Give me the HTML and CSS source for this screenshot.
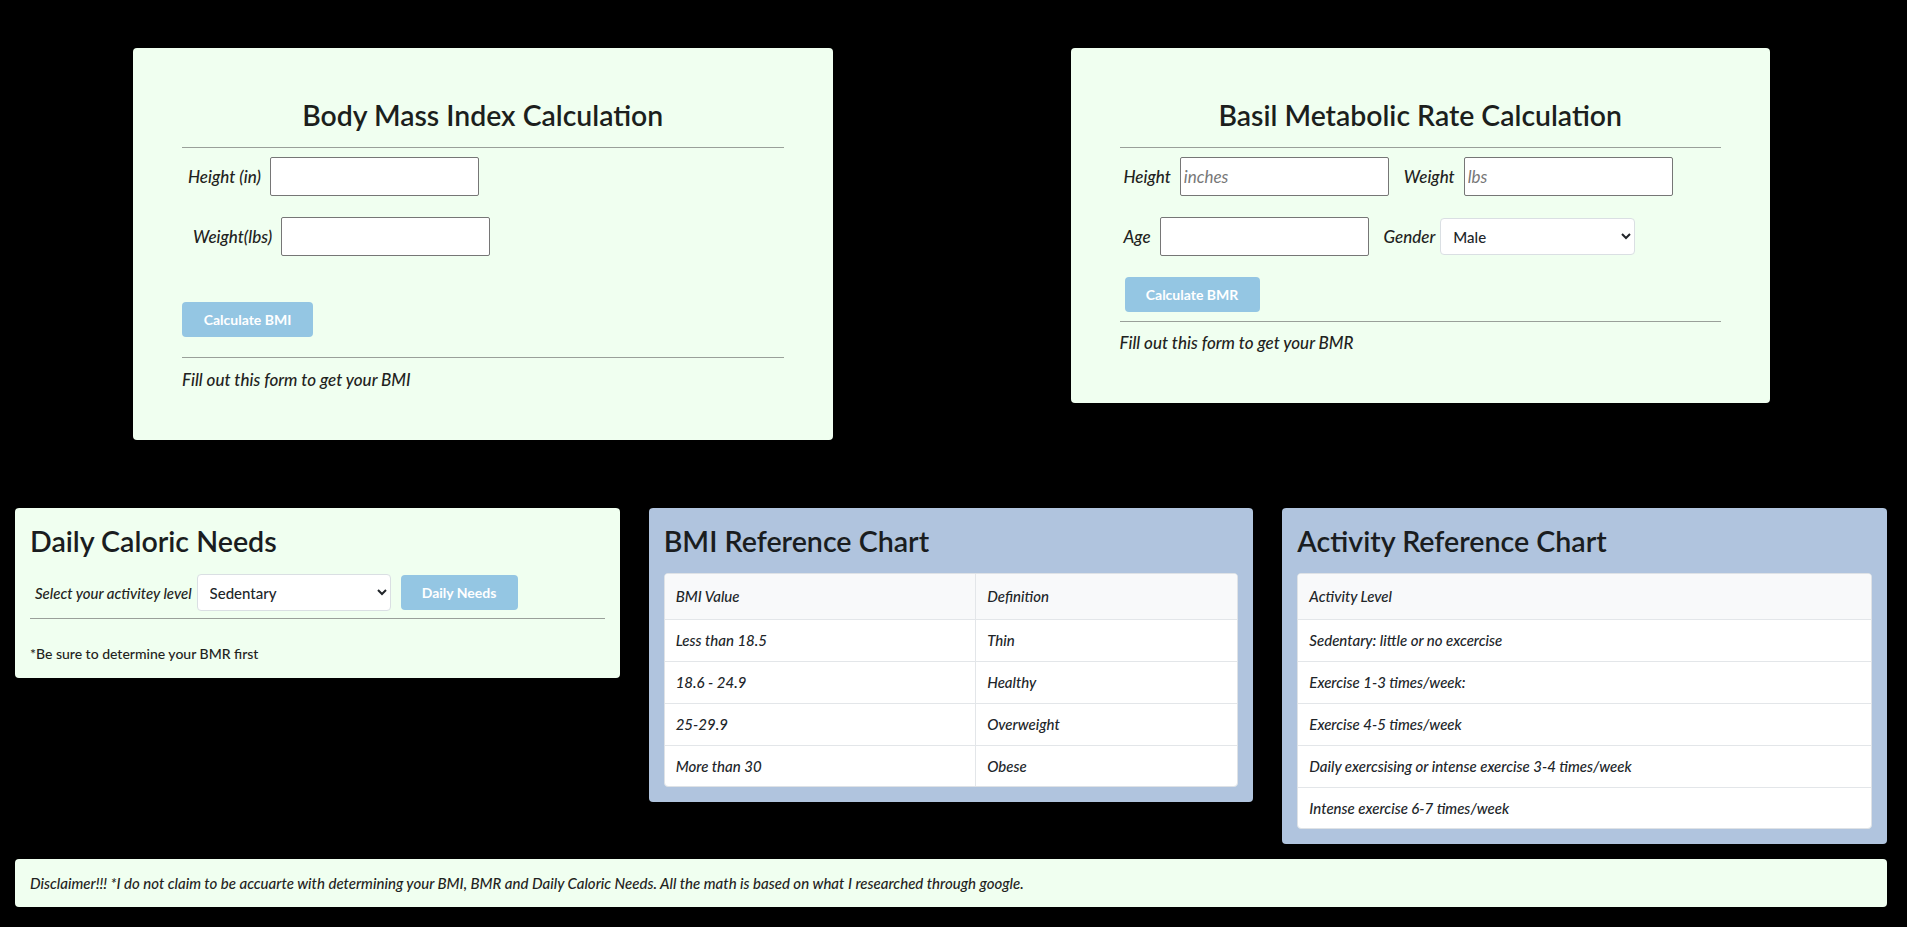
FILE: index.html
```html
<!DOCTYPE html>
<html lang="en">
<head>
<meta charset="utf-8">
<title>Health Calculators</title>
<link rel="stylesheet" href="styles.css">
</head>
<body>
<div class="page">
  <div class="top-row">
    <section class="card calc">
      <h2 class="calc-title">Body Mass Index Calculation</h2>
      <hr class="rule rule-top">
      <div class="form-row">
        <label class="lbl lbl-first">Height (in)</label>
        <input class="field" type="text">
      </div>
      <div class="form-row form-row-gap">
        <label class="lbl lbl-first lbl-weight">Weight(lbs)</label>
        <input class="field" type="text">
      </div>
      <button class="btn btn-bmi" type="button">Calculate BMI</button>
      <hr class="rule rule-bmi">
      <p class="result">Fill out this form to get your BMI</p>
    </section>

    <section class="card calc">
      <h2 class="calc-title">Basil Metabolic Rate Calculation</h2>
      <hr class="rule rule-top">
      <div class="form-row">
        <label class="lbl lbl-first lbl-bmr">Height</label>
        <input class="field" type="text" placeholder="inches">
        <label class="lbl lbl-next">Weight</label>
        <input class="field" type="text" placeholder="lbs">
      </div>
      <div class="form-row form-row-gap">
        <label class="lbl lbl-first lbl-bmr">Age</label>
        <input class="field" type="text">
        <label class="lbl lbl-next lbl-gender">Gender</label>
        <select class="choice choice-gender">
          <option>Male</option>
          <option>Female</option>
        </select>
      </div>
      <button class="btn btn-bmr" type="button">Calculate BMR</button>
      <hr class="rule rule-bmr">
      <p class="result">Fill out this form to get your BMR</p>
    </section>
  </div>

  <div class="mid-row">
    <section class="card panel daily">
      <h3 class="panel-title">Daily Caloric Needs</h3>
      <div class="daily-row">
        <label class="lbl lbl-daily">Select your activitey level</label>
        <select class="choice choice-activity">
          <option>Sedentary</option>
          <option>Exercise 1-3 times/week</option>
          <option>Exercise 4-5 times/week</option>
          <option>Daily exercise</option>
          <option>Intense exercise</option>
        </select>
        <button class="btn btn-daily" type="button">Daily Needs</button>
      </div>
      <hr class="rule rule-daily">
      <p class="note">*Be sure to determine your BMR first</p>
    </section>

    <section class="card panel chart">
      <h3 class="panel-title">BMI Reference Chart</h3>
      <div class="table-wrap">
        <table class="ref-table">
          <thead>
            <tr><th class="col-a">BMI Value</th><th>Definition</th></tr>
          </thead>
          <tbody>
            <tr><td class="col-a">Less than 18.5</td><td>Thin</td></tr>
            <tr><td class="col-a">18.6 - 24.9</td><td>Healthy</td></tr>
            <tr><td class="col-a">25-29.9</td><td>Overweight</td></tr>
            <tr><td class="col-a">More than 30</td><td>Obese</td></tr>
          </tbody>
        </table>
      </div>
    </section>

    <section class="card panel chart">
      <h3 class="panel-title">Activity Reference Chart</h3>
      <div class="table-wrap">
        <table class="ref-table">
          <thead>
            <tr><th>Activity Level</th></tr>
          </thead>
          <tbody>
            <tr><td>Sedentary: little or no excercise</td></tr>
            <tr><td>Exercise 1-3 times/week:</td></tr>
            <tr><td>Exercise 4-5 times/week</td></tr>
            <tr><td>Daily exercsising or intense exercise 3-4 times/week</td></tr>
            <tr><td>Intense exercise 6-7 times/week</td></tr>
          </tbody>
        </table>
      </div>
    </section>
  </div>

  <footer class="card disclaimer">
    <p class="disclaimer-text">Disclaimer!!! *I do not claim to be accuarte with determining your BMI, BMR and Daily Caloric Needs. All the math is based on what I researched through google.</p>
  </footer>
</div>
</body>
</html>
```

FILE: styles.css
```css
* {
  box-sizing: border-box;
}

html, body {
  margin: 0;
  padding: 0;
  background: #000;
}

body {
  font-family: Lato, "Open Sans", sans-serif;
  color: #212529;
  overflow: hidden;
}

.page {
  width: 1907px;
  height: 927px;
}

.card {
  border-radius: 4px;
}

/* ---------- top row ---------- */
.top-row {
  display: flex;
  align-items: flex-start;
  gap: 238px;
  padding: 48px 137px 0 133px;
}

.calc {
  flex: 1 1 0;
  background: #f0fff0;
  padding: 50px 49px 48px 49px;
}

.calc-title {
  margin: 0;
  font-family: Lato, sans-serif;
  font-weight: 600;
  font-size: 28.4px;
  line-height: 34px;
  text-align: center;
  color: #1c1f1d;
}

.rule {
  border: 0;
  border-top: 1px solid #9aa09a;
  height: 0;
  margin: 0;
}

.rule-top {
  margin: 15px 0 9px;
}

.rule-bmi {
  margin: 20px 0 10px;
}

.rule-bmr {
  margin: 9px 0 9px;
}

.rule-daily {
  margin: 7px 0 24px;
}

.form-row {
  display: flex;
  align-items: center;
  height: 39px;
}

.form-row-gap {
  margin-top: 21px;
}

.lbl {
  font-family: Lato, sans-serif;
  font-style: italic;
  font-weight: 500;
  font-size: 17px;
  color: #1f2321;
  white-space: nowrap;
}

.lbl-first {
  margin-left: 6px;
  margin-right: 9px;
}

.lbl-bmr {
  margin-left: 4px;
}

.lbl-weight {
  margin-left: 11px;
}

.lbl-next {
  margin-left: 15px;
  margin-right: 9px;
}

.lbl-gender {
  margin-right: 5px;
}

.field {
  width: 209px;
  height: 39px;
  border: 1px solid #767676;
  border-radius: 2px;
  background: #fff;
  padding: 0 3px;
  font-family: Lato, sans-serif;
  font-style: italic;
  font-size: 17px;
  color: #212529;
}

.field::placeholder {
  color: #777;
  font-style: italic;
}

.choice {
  height: 37px;
  border: 1px solid #dadfe3;
  border-radius: 4px;
  background-color: #fff;
  font-family: Lato, sans-serif;
  font-weight: 500;
  font-size: 15px;
  color: #212529;
  padding: 0 6px 0 8px;
}

.choice-gender {
  width: 195px;
}

.choice-activity {
  width: 194px;
}

.btn {
  display: block;
  height: 35px;
  padding: 0 20px;
  border: 0;
  border-radius: 4px;
  background: #94c6e3;
  color: #fff;
  font-family: Lato, sans-serif;
  font-weight: 700;
  font-size: 14px;
}

.btn-bmi {
  width: 131px;
  margin-top: 46px;
}

.btn-bmr {
  width: 135px;
  margin-top: 21px;
  margin-left: 5px;
}

.btn-daily {
  width: 117px;
  margin-left: 10px;
}

.result {
  margin: 0;
  font-family: Lato, sans-serif;
  font-style: italic;
  font-weight: 500;
  font-size: 17px;
  line-height: 24px;
  color: #1f2321;
}

/* ---------- middle row ---------- */
.mid-row {
  display: flex;
  align-items: flex-start;
  gap: 29px;
  padding: 0 20px 0 15px;
  margin-top: 68px;
}

.panel {
  flex: 1 1 0;
  padding: 16px 15px 15px;
}

.daily {
  background: #f0fff0;
  padding-bottom: 14px;
}

.chart {
  background: #b0c4de;
}

.panel-title {
  margin: 0;
  font-family: Lato, sans-serif;
  font-weight: 600;
  font-size: 28.6px;
  line-height: 34px;
  color: #1a1d20;
}

.daily-row {
  display: flex;
  align-items: center;
  margin-top: 16px;
}

.lbl-daily {
  font-size: 15px;
  margin-left: 5px;
  margin-right: 5px;
}

.note {
  margin: 0;
  font-family: Lato, sans-serif;
  font-weight: 500;
  font-size: 14px;
  line-height: 21px;
  color: #1f2321;
}

.table-wrap {
  margin-top: 15px;
  background: #fff;
  border: 1px solid #dee2e6;
  border-radius: 4px;
  overflow: hidden;
}

.ref-table {
  width: 100%;
  border-collapse: collapse;
  font-family: Lato, sans-serif;
  font-style: italic;
  font-weight: 500;
  font-size: 15px;
  color: #212529;
}

.ref-table th,
.ref-table td {
  text-align: left;
  font-weight: 500;
  padding: 0 11px;
  border-bottom: 1px solid #e3e6e9;
}

.ref-table th {
  height: 45px;
  background: #f8f9fa;
}

.ref-table td {
  height: 42px;
}

.ref-table tr:last-child td {
  border-bottom: 0;
  height: 41px;
}

.ref-table .col-a {
  width: 311px;
  border-right: 1px solid #e3e6e9;
}

/* ---------- footer ---------- */
.disclaimer {
  display: flex;
  align-items: center;
  height: 48px;
  margin: 15px 20px 0 15px;
  padding: 0 15px;
  background: #f0fff0;
}

.disclaimer-text {
  margin: 0;
  font-family: Lato, sans-serif;
  font-style: italic;
  font-weight: 500;
  font-size: 15px;
  color: #1f2321;
}
```
